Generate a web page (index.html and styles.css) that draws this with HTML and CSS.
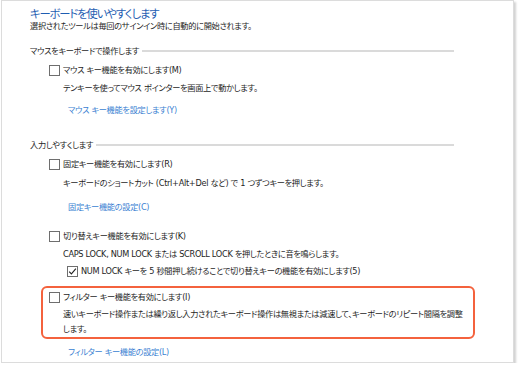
FILE: index.html
```html
<!DOCTYPE html>
<html lang="ja">
<head>
    <meta charset="UTF-8">
    <meta name="viewport" content="width=device-width, initial-scale=1.0">
    <title>キーボードを使いやすくします</title>
    <link rel="stylesheet" href="styles.css">
</head>
<body>
    <div class="panel">
        <h1 class="title">キーボードを使いやすくします</h1>
        <p class="subtitle">選択されたツールは毎回のサインイン時に自動的に開始されます。</p>

        <!-- Mouse keys -->
        <div class="group-head group-mouse">マウスをキーボードで操作します</div>
        <div class="check-row row-mouse">
            <span class="box"></span>
            <span>マウス キー機能を有効にします(M)</span>
        </div>
        <p class="desc desc-mouse">テンキーを使ってマウス ポインターを画面上で動かします。</p>
        <a class="link link-mouse">マウス キー機能を設定します(Y)</a>

        <!-- Typing -->
        <div class="group-head group-typing">入力しやすくします</div>
        <div class="check-row row-sticky">
            <span class="box"></span>
            <span>固定キー機能を有効にします(R)</span>
        </div>
        <p class="desc desc-sticky">キーボードのショートカット (Ctrl+Alt+Del など) で 1 つずつキーを押します。</p>
        <a class="link link-sticky">固定キー機能の設定(C)</a>

        <div class="check-row row-toggle">
            <span class="box"></span>
            <span>切り替えキー機能を有効にします(K)</span>
        </div>
        <p class="desc desc-toggle">CAPS LOCK, NUM LOCK または SCROLL LOCK を押したときに音を鳴らします。</p>
        <div class="check-row row-numlock">
            <span class="box checked">
                <svg viewBox="0 0 11 11" width="11" height="11"><path d="M2.2 5.6 L4.4 7.9 L8.9 2.6" fill="none" stroke="#222" stroke-width="1.1"/></svg>
            </span>
            <span>NUM LOCK キーを 5 秒間押し続けることで切り替えキーの機能を有効にします(5)</span>
        </div>

        <div class="highlight">
            <div class="check-row row-filter">
                <span class="box"></span>
                <span>フィルター キー機能を有効にします(I)</span>
            </div>
            <p class="desc desc-filter">速いキーボード操作または繰り返し入力されたキーボード操作は無視または減速して、キーボードのリピート間隔を調整<br>します。</p>
        </div>
        <a class="link link-filter">フィルター キー機能の設定(L)</a>
    </div>
</body>
</html>
```

FILE: styles.css
```css
* { box-sizing: border-box; }
body {
    margin: 0;
    background: #fff;
    font-family: "DejaVu Sans", "Noto Sans CJK JP", sans-serif;
    font-feature-settings: "palt";
    color: #1e1e1e;
    font-size: 8.2px;
    letter-spacing: -0.3px;
}
p, h1 { margin: 0; }

.panel {
    margin-left: 1px;
    width: 513px;
    height: 363px;
    border: 1px solid #dcdcdc;
    box-shadow: 2px 2px 2px rgba(0,0,0,0.18);
    padding: 5px 0 0 28px;
}
.title {
    font-family: "Noto Sans CJK JP", sans-serif;
    font-size: 11.3px;
    letter-spacing: -1.1px;
    font-weight: normal;
    color: #1f5eb2;
    line-height: 14px;
}
.subtitle {
    line-height: 13px;
}

.group-head {
    display: flex;
    align-items: center;
    width: 424px;
    line-height: 14px;
    margin-top: 11px;
}
.group-head::after {
    content: "";
    flex: 1;
    height: 2px;
    background: #dadada;
    margin-left: 3px;
}
.group-typing { margin-top: 21px; }

.check-row {
    display: flex;
    align-items: center;
    line-height: 14px;
    margin-left: 19px;
    margin-top: 5px;
}
.box {
    width: 11px;
    height: 11px;
    border: 1px solid #6e6e6e;
    background: #fff;
    margin-right: 3px;
    flex: none;
    position: relative;
}
.box svg {
    position: absolute;
    left: -1px;
    top: -1px;
}
.row-toggle { margin-top: 15px; }
.row-numlock { margin-left: 37px; margin-top: 3px; }

.desc {
    line-height: 14px;
    margin-left: 33px;
    margin-top: 4px;
}
.desc-sticky { margin-top: 5px; }

.link {
    display: block;
    color: #3a7fd2;
    line-height: 14px;
    margin-left: 38px;
    margin-top: 8px;
}
.link-sticky { margin-top: 10px; }
.link-filter { margin-top: 6px; }

.highlight {
    margin: 8px 0 0 11px;
    width: 434px;
    border: 2.5px solid #f4623d;
    border-radius: 6px;
    padding: 2px 8px 0 6px;
}
.highlight .check-row { margin-left: 0; margin-top: 0; }
.desc-filter {
    margin-left: 14px;
    margin-top: 3px;
    line-height: 15px;
}
```
